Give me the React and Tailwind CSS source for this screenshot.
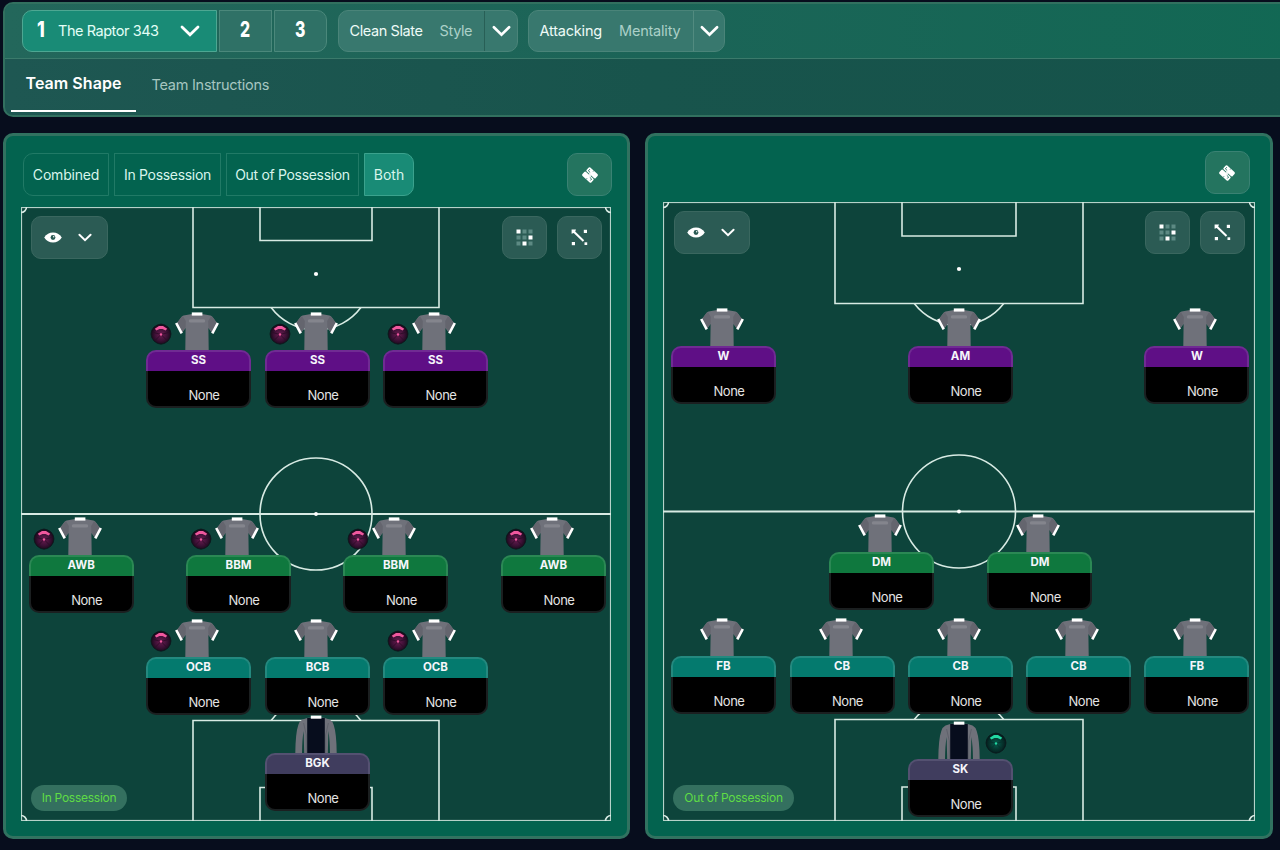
import React from "react";

const BODY = "font-['Inter','Liberation_Sans',sans-serif]";

function Chevron({ className, w = 2.8 }) {
  return (
    <svg className={className} viewBox="0 0 20 12" fill="none" stroke="#fff" strokeWidth={w} strokeLinecap="round" strokeLinejoin="miter">
      <path d="M2 2 10 9.800 18 2" />
    </svg>
  );
}

function Selector({ name, kind, className, split, gap }) {
  return (
    <div className={`flex h-[42px] items-stretch rounded-[10px] border border-[#4a8479] bg-[#38786e] text-[14.500px] ${className}`}>
      <div className={`flex flex-1 items-center pb-px pl-[10.500px] ${gap}`}>
        <span className="text-[#eefbf7]">{name}</span>
        <span className="text-[#abd0c8]">{kind}</span>
      </div>
      <div className={`flex items-center justify-center border-l ${split}`}>
        <Chevron className="h-[12px] w-[19px]" />
      </div>
    </div>
  );
}

function Header() {
  return (
    <header className="ml-[3px] h-[115px] w-[1290px] shrink-0 rounded-[10px] border-2 border-[#32705f] bg-linear-to-r from-[#1e5752] via-[#18544c] to-[#15534a]">
      <div className="flex h-[55px] items-start rounded-t-[8px] border-b border-[#3b7a6b] bg-linear-to-r from-[#23675b] via-[#1b6457] to-[#126854] pt-[6px] pl-[17px]">
        <div className="flex h-[42px] w-[195px] items-center rounded-l-[10px] border border-[#4da792] bg-[#198b76]">
          <span className="mb-[4px] ml-[14px] w-[13px] origin-left scale-x-[0.8] text-[22px] leading-none font-extrabold text-white">1</span>
          <span className="mb-px ml-[8px] w-[101px] text-[14.500px] tracking-[-0.45px] whitespace-nowrap text-[#e3fff7]">The Raptor 343</span>
          <Chevron className="ml-[21px] h-[12px] w-[20px]" />
        </div>
        <div className="ml-[2px] flex h-[42px] w-[53px] items-center justify-center border border-[#4b887b] bg-[#2f7166]">
          <span className="mb-[4px] scale-x-[0.72] text-[22px] leading-none font-extrabold text-white">2</span>
        </div>
        <div className="ml-[2px] flex h-[42px] w-[53px] items-center justify-center rounded-r-[10px] border border-[#4b887b] bg-[#2f7166]">
          <span className="mb-[4px] scale-x-[0.72] text-[22px] leading-none font-extrabold text-white">3</span>
        </div>
        <Selector name="Clean Slate" kind="Style" className="ml-[11px] w-[180px] tracking-[-0.4px]" split="w-[33px] border-[#285f56]" gap="gap-[17px]" />
        <Selector name="Attacking" kind="Mentality" className="ml-[10px] w-[197px] tracking-[-0.200px]" split="w-[31px] border-[#528b80]" gap="gap-[17px]" />
      </div>
      <nav className="flex pl-[6px]">
        <div className="flex h-[53px] w-[125px] justify-center border-b-2 border-white pt-[13px] text-[16px] leading-[23px] font-semibold tracking-[0.050px] text-white">Team Shape</div>
        <div className="ml-[15.500px] pt-[15px] text-[14.500px] leading-[22px] tracking-[-0.260px] text-[#a6c6c0]">Team Instructions</div>
      </nav>
    </header>
  );
}

function KitIcon() {
  return (
    <svg className="h-[18px] w-[18px]" viewBox="0 0 18 18">
      <g transform="rotate(42 9 9)">
        <rect x="3" y="3.300" width="12.200" height="5.300" rx="1.300" fill="#fff" />
        <rect x="2.800" y="9.400" width="12.200" height="5.300" rx="1.300" fill="#fff" />
        <path d="M5 4.800v2.200h2.400M12.900 12.900V10.900H10.500M9 2.800v1.500M9 13.500v1.500" stroke="#2a7465" strokeWidth=".9" fill="none" />
        <path d="M8 8.200h2v1.600H8Z" fill="#fff" />
      </g>
    </svg>
  );
}

function EyeIcon() {
  return (
    <svg className="h-[11px] w-[18px]" viewBox="0 0 18 11">
      <path d="M.2 5.500C2.400 2 5.400.6 9 .6s6.600 1.400 8.800 4.900C15.600 9 12.600 10.400 9 10.400S2.400 9 .2 5.500Z" fill="#fff" />
      <circle cx="9" cy="5.500" r="2.400" fill="#2b5b54" />
      <circle cx="9.700" cy="4.800" r=".7" fill="#fff" />
    </svg>
  );
}

function GridIcon() {
  const bright = [0, 5, 7];
  return (
    <svg className="mr-px h-[17px] w-[17px]" viewBox="0 0 17 17">
      {Array.from({ length: 9 }, (_, i) => (
        <rect key={i} x={0.5 + (i % 3) * 6} y={0.5 + Math.floor(i / 3) * 6} width="4" height="4" fill={bright.includes(i) ? "#fff" : "#5d8a83"} />
      ))}
    </svg>
  );
}

function ArrowIcon() {
  return (
    <svg className="h-[17px] w-[17px]" viewBox="0 0 17 17" fill="#fff">
      <path d="M.6.6H5L4.200 2.400 13.200 11.200 11.800 12.700 2.700 3.900.6 4.800Z" />
      <rect x="12.800" y=".8" width="3.200" height="3.200" />
      <rect x=".8" y="13" width="3.200" height="3.200" />
      <rect x="13.500" y="13.300" width="2.700" height="2.700" />
    </svg>
  );
}

function PitchLines({ w, h, six, box, r }) {
  const cx = w / 2;
  const bx = 172;
  const sx = 239;
  const spot = 67;
  const half = Math.sqrt(r * r - (box - spot) ** 2);
  return (
    <svg className="absolute inset-0 h-full w-full" viewBox={`0 0 ${w} ${h}`} fill="none" stroke="#d8ebe4" strokeWidth="1.600">
      <rect x=".5" y=".5" width={w - 1} height={h - 1} strokeWidth="1.200" stroke="#b5d2c9" />
      <path d={`M0 ${h / 2}H${w}`} strokeWidth="1.800" />
      <circle cx={cx} cy={h / 2} r={r} />
      <circle cx={cx} cy={h / 2} r="1.900" fill="#fff" stroke="none" />
      <circle cx={cx} cy={spot} r="2.100" fill="#fff" stroke="none" />
      <path d={`M${bx} 0V${box}H${w - bx}V0M${sx} 0V${six}H${w - sx}V0`} />
      <path d={`M${bx} ${h}V${h - box}H${w - bx}V${h}M${sx} ${h}V${h - six}H${w - sx}V${h}`} />
      <path d={`M${cx - half} ${box}A${r} ${r} 0 0 0 ${cx + half} ${box}`} />
      <path d={`M${cx - half} ${h - box}A${r} ${r} 0 0 1 ${cx + half} ${h - box}`} />
      <path d={`M0 5.500A5.500 5.500 0 0 0 5.500 0M${w - 5.500} 0A5.500 5.500 0 0 0 ${w} 5.500M0 ${h - 5.500}A5.500 5.500 0 0 1 5.500 ${h}M${w - 5.500} ${h}A5.500 5.500 0 0 1 ${w} ${h - 5.500}`} />
    </svg>
  );
}

function Shirt() {
  return (
    <svg className="h-[38px] w-[44px]" viewBox="0 0 44 38">
      <path d="M17 2 8.500 3.600Q6.800 4 6 5.600L.8 12.500 6.500 21.500 10.600 16 10.300 38H33.700L33.400 16 37.500 21.500 43.200 12.500 38 5.600Q37.200 4 35.500 3.600L27 2Z" fill="#6f717a" />
      <path d="M8 4.200Q6.500 4.600 5.800 6L1.500 12 6.500 21 10.600 15.500 10.800 9ZM36 4.200Q37.500 4.600 38.200 6L42.500 12 37.500 21 33.400 15.500 33.200 9Z" fill="#64656e" />
      <path d="M1.200 11 6.700 21.400M42.800 11 37.300 21.400" stroke="#fff" strokeWidth="2.600" />
      <path d="M16.800 .4h10.600v3.200H16.800Z" fill="#fff" />
      <rect x="13.800" y="7.300" width="16.400" height="3.200" rx="1.500" fill="#84858d" />
    </svg>
  );
}

function KeeperShirt() {
  return (
    <svg className="h-[38px] w-[44px]" viewBox="0 0 44 38">
      <path d="M14 2.800 8.500 4.500Q5.500 6 4.300 10 1.500 18 1.300 38H42.700Q42.500 18 39.700 10 38.500 6 35.500 4.500L30 2.800Z" fill="#6f717a" />
      <path d="M8 38Q8.200 24 9.600 16L10.200 38ZM36 38Q35.800 24 34.400 16L33.800 38Z" fill="#0f443b" />
      <path d="M13.200 3H30.800V38H13.200Z" fill="#070d1d" />
      <path d="M9.600 8 12.300 20V38M34.400 8 31.700 20V38" stroke="#5a5d67" strokeWidth=".8" fill="none" />
      <path d="M16.800 .6h10.600v3.100H16.800Z" fill="#fff" />
    </svg>
  );
}

function Badge({ green }) {
  const tone = green ? "#22d8a2" : "#f0589e";
  const id = green ? "badge-green" : "badge-pink";
  return (
    <svg className="h-[22px] w-[22px]" viewBox="0 0 22 22">
      <defs>
        <radialGradient id={id} cx="50%" cy="52%" r="50%">
          <stop offset="0" stopColor={green ? "#07604f" : "#6b1c50"} />
          <stop offset=".6" stopColor={green ? "#06362f" : "#3d1136"} />
          <stop offset="1" stopColor={green ? "#051b1c" : "#180a1a"} />
        </radialGradient>
      </defs>
      <path d="M11 1Q15 1.500 18 4 21 7 21 11 20.800 15 18 18 15 21 11 21.200 7 21 4 18 1.200 15 1 11 1 7 4 4 7 1.500 11 1Z" fill={`url(#${id})`} stroke="#0a171b" strokeWidth=".8" />
      <path d="M3.500 9.500 11 11.500 18.500 9.500M5 17.500 11 11.500 17 17.500" stroke={green ? "#07302c" : "#2a0c26"} strokeWidth=".8" fill="none" />
      <path d="M4.800 5.800 9 2.900H13L17.200 5.800 15.600 7.600 12.500 5.900H9.500L6.400 7.600Z" fill={tone} />
      <circle cx="11" cy="11.500" r="1.200" fill={tone} />
    </svg>
  );
}

const TONES = {
  purple: { head: "bg-[#5f0f86]", edge: "border-[#702b93]" },
  green: { head: "bg-[#0f783e]", edge: "border-[#2b8854]" },
  teal: { head: "bg-[#047a6e]", edge: "border-[#24897f]" },
  slate: { head: "bg-[#403d5e]", edge: "border-[#545171]" },
};

function Player({ x, y, role, tone, badge, keeper }) {
  const t = TONES[tone];
  return (
    <div className="absolute w-[105px]" style={{ left: x, top: y - 38 }}>
      <div className="flex h-[38px] items-start pl-[4px]">
        <div className="mt-[11px] h-[22px] w-[22px]">{badge === "pink" && <Badge />}</div>
        <div className="ml-[3px]">{keeper ? <KeeperShirt /> : <Shirt />}</div>
        {badge === "green" && <div className="mt-[11px] ml-[4px]"><Badge green /></div>}
      </div>
      <div className={`flex h-[21px] justify-center rounded-t-[10px] border-2 border-b-0 text-[11.500px] leading-[16px] font-bold text-[#f5f5fa] ${t.head} ${t.edge}`}>
        {role}
      </div>
      <div className="flex h-[37px] justify-center rounded-b-[10px] border-[2.500px] border-t-0 border-[#1b1f20] bg-black pt-[16px] pl-[11px] text-[13px] leading-[16px] tracking-[-0.500px] text-[#e4e4e4]">
        None
      </div>
    </div>
  );
}

const GLASS = "flex items-center justify-center rounded-[10px] border";

function Pitch({ className, w, h, six, box, r, players, label, labelClass, padClass, eyeClass }) {
  return (
    <div className={`relative flex flex-col justify-between bg-[#0d443b] ${className}`}>
      <PitchLines w={w} h={h} six={six} box={box} r={r} />
      <div className={`relative flex ${padClass}`}>
        <div className={`${GLASS} h-[43px] gap-[16px] border-[#3a675f] bg-[#2b5b54] pr-[3px] ${eyeClass}`}>
          <EyeIcon />
          <Chevron className="h-[9px] w-[14px]" w={2.8} />
        </div>
        <div className={`${GLASS} ml-auto h-[43px] w-[45px] border-[#3a675f] bg-[#2b5b54]`}><GridIcon /></div>
        <div className={`${GLASS} ml-[10px] h-[43px] w-[45px] border-[#3a675f] bg-[#2b5b54]`}><ArrowIcon /></div>
      </div>
      <div className="relative flex pb-[10px] pl-[10px]">
        <span className={`flex h-[26px] items-center justify-center rounded-full bg-[#34705f] text-[12px] tracking-[-0.260px] whitespace-nowrap text-[#5fdc45] ${labelClass}`}>{label}</span>
      </div>
      {players.map((p, i) => <Player key={i} {...p} />)}
    </div>
  );
}

const IN_POSSESSION = [
  { x: 125, y: 142.500, role: "SS", tone: "purple", badge: "pink" },
  { x: 244, y: 142.500, role: "SS", tone: "purple", badge: "pink" },
  { x: 362, y: 142.500, role: "SS", tone: "purple", badge: "pink" },
  { x: 7.600, y: 347.500, role: "AWB", tone: "green", badge: "pink" },
  { x: 165, y: 347.500, role: "BBM", tone: "green", badge: "pink" },
  { x: 322.400, y: 347.500, role: "BBM", tone: "green", badge: "pink" },
  { x: 480, y: 347.500, role: "AWB", tone: "green", badge: "pink" },
  { x: 125, y: 449.500, role: "OCB", tone: "teal", badge: "pink" },
  { x: 244, y: 449.500, role: "BCB", tone: "teal" },
  { x: 362, y: 449.500, role: "OCB", tone: "teal", badge: "pink" },
  { x: 244, y: 545.500, role: "BGK", tone: "slate", keeper: true },
];

const OUT_OF_POSSESSION = [
  { x: 8, y: 144, role: "W", tone: "purple" },
  { x: 245, y: 144, role: "AM", tone: "purple" },
  { x: 481.400, y: 144, role: "W", tone: "purple" },
  { x: 166, y: 350, role: "DM", tone: "green" },
  { x: 324.400, y: 350, role: "DM", tone: "green" },
  { x: 8, y: 454, role: "FB", tone: "teal" },
  { x: 126.500, y: 454, role: "CB", tone: "teal" },
  { x: 245, y: 454, role: "CB", tone: "teal" },
  { x: 363, y: 454, role: "CB", tone: "teal" },
  { x: 481.400, y: 454, role: "FB", tone: "teal" },
  { x: 245, y: 557, role: "SK", tone: "slate", keeper: true, badge: "green" },
];

const PANEL = "flex h-[706px] flex-col rounded-[10px] border-[3px] border-[#317260] bg-[#03634f]";
const TAB = "flex h-[43px] items-center justify-center border pb-px whitespace-nowrap";

export default function App() {
  return (
    <div className={`flex h-[850px] w-[1280px] flex-col overflow-hidden bg-[#070d1d] pt-[2px] ${BODY}`}>
      <Header />
      <main className="mt-[16px] flex pl-[3px]">
        <section className={`${PANEL} w-[627px] pl-[15px]`}>
          <div className="mt-[17px] flex pl-[2px] text-[14px] tracking-[-0.320px] text-[#d8f5ec]">
            <div className={`${TAB} w-[86px] rounded-l-[10px] border-[#217a66] tracking-[-0.200px]`}>Combined</div>
            <div className={`${TAB} ml-[5px] w-[107px] border-[#217a66]`}>In Possession</div>
            <div className={`${TAB} ml-[5px] w-[133px] border-[#217a66]`}>Out of Possession</div>
            <div className={`${TAB} ml-[5px] w-[50px] rounded-r-[10px] border-[#3ba28d] bg-[#198b76] tracking-normal`}>Both</div>
            <div className={`${GLASS} mr-[15px] ml-auto h-[43px] w-[45px] shrink-0 border-[#3a8273] bg-[#24745f]`}><KitIcon /></div>
          </div>
          <Pitch className="mt-[11px] h-[614px] w-[590px]" w={590} h={614} six={33.5} box={100.5} r={56}
            players={IN_POSSESSION} label="In Possession" labelClass="w-[96px]" padClass="pt-[9px] pr-[9px] pl-[9.500px]" eyeClass="w-[77px]" />
        </section>
        <section className={`${PANEL} ml-[15px] w-[628px] pl-[15px]`}>
          <div className="mt-[15px] flex">
            <div className={`${GLASS} mr-[20px] ml-auto h-[43px] w-[45px] border-[#3a8273] bg-[#24745f] pr-px`}><KitIcon /></div>
          </div>
          <Pitch className="mt-[8px] h-[619px] w-[592px]" w={592} h={619} six={34} box={101.5} r={56.5}
            players={OUT_OF_POSSESSION} label="Out of Possession" labelClass="w-[121px]" padClass="pt-[9px] pr-[10px] pl-[11px]" eyeClass="w-[76px]" />
        </section>
      </main>
    </div>
  );
}
